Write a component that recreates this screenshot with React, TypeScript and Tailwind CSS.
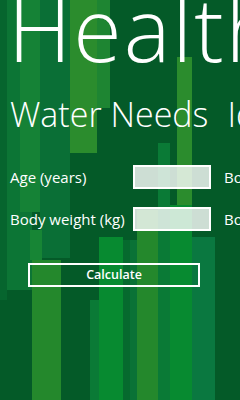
const stripes = [
  { x: 0, y: 0, w: 7, h: 300, c: '#06652e' },
  { x: 7, y: 0, w: 13, h: 290, c: '#0c7535' },
  { x: 20, y: 0, w: 20, h: 212, c: '#158236' },
  { x: 40, y: 0, w: 30, h: 258, c: '#0a6f36' },
  { x: 70, y: 0, w: 27, h: 153, c: '#2b8c2d' },
  { x: 97, y: 0, w: 13, h: 108, c: '#1e8532' },
  { x: 20, y: 212, w: 12, h: 78, c: '#0c7535' },
  { x: 30, y: 230, w: 12, h: 30, c: '#178535' },
  { x: 32, y: 260, w: 29, h: 140, c: '#24882c' },
  { x: 90, y: 300, w: 9, h: 100, c: '#0a7a36' },
  { x: 99, y: 237, w: 24, h: 163, c: '#078a30' },
  { x: 123, y: 240, w: 7, h: 160, c: '#066a2e' },
  { x: 130, y: 240, w: 7, h: 160, c: '#0a7236' },
  { x: 137, y: 210, w: 23, h: 190, c: '#24882c' },
  { x: 158, y: 143, w: 12, h: 257, c: '#0a7a36' },
  { x: 177, y: 57, w: 15, h: 148, c: '#2b8c2d' },
  { x: 170, y: 205, w: 22, h: 195, c: '#078a30' },
  { x: 192, y: 237, w: 23, h: 163, c: '#0a7840' },
];

function Background(): JSX.Element {
  return (
    <svg className="absolute inset-0" width="240" height="400" viewBox="0 0 240 400">
      <rect x="0" y="0" width="240" height="400" fill="#045a28" />
      {stripes.map((s, i) => (
        <rect key={i} x={s.x} y={s.y} width={s.w} height={s.h} fill={s.c} />
      ))}
    </svg>
  );
}

function Field({ label, other }: { label: string; other: string }): JSX.Element {
  return (
    <div className="flex items-center whitespace-nowrap">
      <span className="w-[123px] shrink-0 text-[15px] text-white">{label}</span>
      <input
        type="text"
        className="w-[78px] h-[24px] shrink-0 border-2 border-white bg-white/80 outline-none"
      />
      <span className="ml-[13px] text-[15px] text-white">{other}</span>
    </div>
  );
}

export default function App(): JSX.Element {
  return (
    <div
      className="relative w-[240px] h-[400px] overflow-hidden"
      style={{ fontFamily: '"Open Sans", "Noto Sans", sans-serif' }}
    >
      <Background />
      <div className="relative flex flex-col">
        <h1 className="-mt-[16px] ml-[8px] whitespace-nowrap text-[88px] font-light leading-none tracking-[2px] text-white">
          Health
        </h1>
        <div className="mt-[25px] ml-[10px] flex gap-[19px] whitespace-nowrap text-[34px] font-light leading-none text-white">
          <span>Water Needs</span>
          <span>Ideal Weight</span>
        </div>
        <div className="mt-[34px] ml-[10px] flex flex-col gap-[18px]">
          <Field label="Age (years)" other="Body height (cm)" />
          <Field label="Body weight (kg)" other="Body fat (%)" />
        </div>
        <button className="mt-[32px] ml-[28px] w-[172px] h-[24px] border-2 border-white text-[12.5px] font-semibold text-white">
          Calculate
        </button>
      </div>
    </div>
  );
}
